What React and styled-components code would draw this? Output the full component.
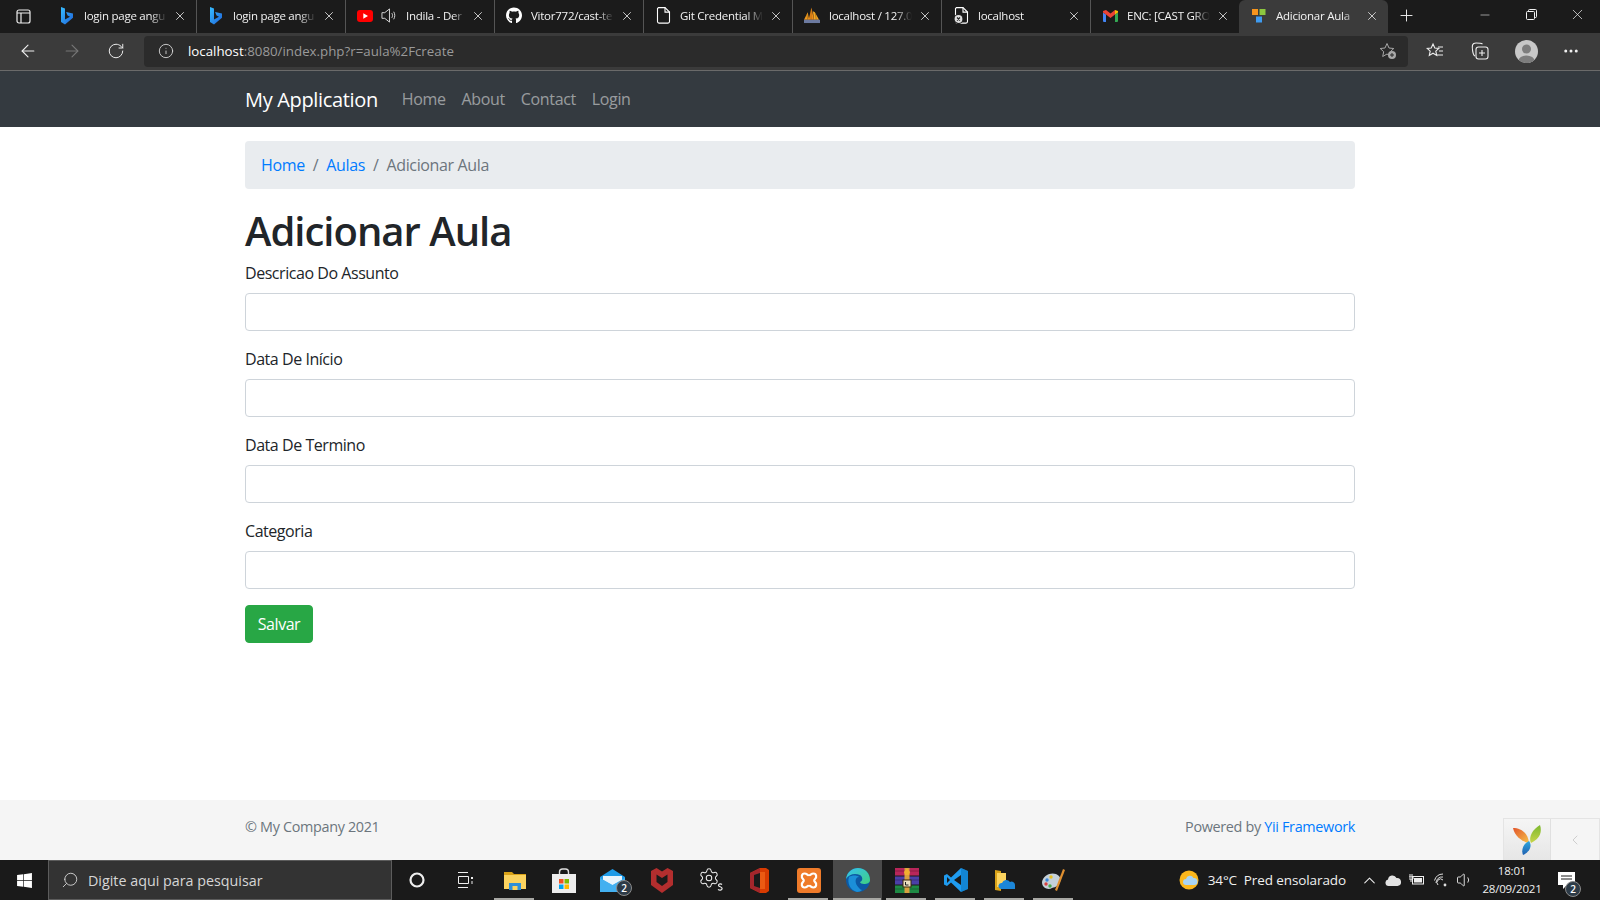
import React from "react";
import styled, { createGlobalStyle } from "styled-components";
import { FaGithub, FaWindows } from "react-icons/fa";
import {
  ArrowLeft,
  ArrowRight,
  ChevronLeft,
  ChevronUp,
  Ellipsis,
  Info,
  Minus,
  Plus,
  RotateCw,
  Search,
  Settings,
  Volume1,
  X,
} from "lucide-react";

const FONT = `"Open Sans", "Noto Sans", sans-serif`;

const Global = createGlobalStyle`
  html, body { margin: 0; padding: 0; background: #fff; }
  body { font-family: ${FONT}; font-size: 16px; color: #212529; }
  * { box-sizing: border-box; }
`;

const Screen = styled.div`
  width: 1600px;
  height: 900px;
  display: flex;
  flex-direction: column;
  overflow: hidden;
  position: relative;
`;

/* browser chrome */
const TabStrip = styled.div`
  height: 33px;
  background: #1b1b1b;
  display: flex;
  align-items: stretch;
`;
const SideButton = styled.div`
  width: 47px;
  display: flex;
  align-items: center;
  justify-content: center;
  color: #eee;
`;
const Tab = styled.div`
  width: 149px;
  height: 33px;
  display: flex;
  align-items: center;
  padding: 0 9px 2px 11px;
  color: #f2f2f2;
  font-size: 11.5px;
  letter-spacing: -0.25px;
  background: ${(p) => (p.$active ? "#3b3b3b" : "transparent")};
  border-radius: ${(p) => (p.$active ? "6px 6px 0 0" : "0")};
  border-left: ${(p) => (p.$divider ? "1px solid #555" : "1px solid transparent")};
`;
const TabIcon = styled.span`
  width: 16px;
  height: 16px;
  flex: none;
  display: flex;
  align-items: center;
  justify-content: center;
  margin-right: ${(p) => p.$gap || 9}px;
  color: #fff;
`;
const TabTitle = styled.span`
  flex: 1;
  min-width: 0;
  white-space: nowrap;
  overflow: hidden;
  -webkit-mask-image: linear-gradient(90deg, #000 80%, transparent 100%);
  mask-image: linear-gradient(90deg, #000 80%, transparent 100%);
`;
const TabClose = styled(X)`
  flex: none;
  margin-left: 6px;
  color: #ddd;
`;
const NewTab = styled.div`
  width: 36px;
  display: flex;
  align-items: center;
  justify-content: center;
  padding-bottom: 2px;
  color: #eee;
`;
const Spacer = styled.div`
  flex: 1;
`;
const WindowButton = styled.div`
  width: 46px;
  display: flex;
  align-items: center;
  justify-content: center;
  color: #f2f2f2;
  padding-bottom: 4px;
`;
const Toolbar = styled.div`
  height: 38px;
  background: #3b3b3b;
  border-bottom: 1px solid #6a6a6a;
  display: flex;
  align-items: center;
  padding: 0 7px 1px 6px;
`;
const NavButton = styled.div`
  width: ${(p) => p.$w || 44}px;
  display: flex;
  justify-content: center;
  color: ${(p) => (p.$disabled ? "#777" : "#f0f0f0")};
`;
const AddressBar = styled.div`
  flex: 1;
  height: 31px;
  margin: 0 5px 0 6px;
  border-radius: 4px;
  background: #2b2b2b;
  display: flex;
  align-items: center;
  padding: 0 11px 0 14px;
  font-size: 13.3px;
  color: #9a9a9a;
`;
const Host = styled.span`
  color: #fff;
`;
const Url = styled.div`
  flex: 1;
  margin-left: 14px;
`;
const Avatar = styled.div`
  width: 23px;
  height: 23px;
  border-radius: 50%;
  background: #c8c8c8;
  overflow: hidden;
  display: flex;
`;

/* page */
const Page = styled.div`
  flex: 1;
  min-height: 0;
  display: flex;
  flex-direction: column;
  background: #fff;
`;
const Container = styled.div`
  width: 1110px;
  margin: 0 auto;
  display: flex;
  align-items: ${(p) => p.$align || "stretch"};
  flex-direction: ${(p) => p.$dir || "row"};
  justify-content: ${(p) => p.$justify || "flex-start"};
`;
const Navbar = styled.nav`
  height: 56px;
  background: #343a40;
  display: flex;
  align-items: center;
`;
const Brand = styled.a`
  font-size: 20px;
  letter-spacing: -0.34px;
  color: #fff;
  margin-right: 24px;
  line-height: 30px;
  padding-top: 2px;
`;
const NavLink = styled.a`
  font-size: 16px;
  letter-spacing: -0.36px;
  color: rgba(255, 255, 255, 0.5);
  margin-right: 16px;
`;
const Main = styled.main`
  flex: 1;
  padding-top: 14px;
`;
const Breadcrumb = styled.div`
  height: 48px;
  border-radius: 4px;
  background: #e9ecef;
  padding: 0 16px;
  margin-bottom: 16px;
  display: flex;
  align-items: center;
  font-size: 16px;
  letter-spacing: -0.36px;
  color: #6c757d;
`;
const Crumb = styled.a`
  color: #007bff;
`;
const CrumbSep = styled.span`
  padding: 0 8px;
`;
const Heading = styled.h1`
  margin: 0 0 8px;
  font-size: 40px;
  line-height: 48px;
  padding-top: 2px;
  height: 48px;
  font-weight: 600;
  letter-spacing: -1px;
  color: #212529;
`;
const Field = styled.div`
  margin-bottom: 16px;
`;
const Label = styled.label`
  display: block;
  font-size: 16px;
  line-height: 24px;
  letter-spacing: -0.45px;
  margin-bottom: 8px;
`;
const Input = styled.input`
  display: block;
  width: 100%;
  height: 38px;
  padding: 6px 12px;
  border: 1px solid #ced4da;
  border-radius: 4px;
  background: #fff;
`;
const Button = styled.button`
  width: 68px;
  height: 38px;
  padding: 0;
  border: 1px solid #28a745;
  border-radius: 4px;
  background: #28a745;
  color: #fff;
  font-family: ${FONT};
  font-size: 16px;
  letter-spacing: -0.45px;
`;
const Footer = styled.footer`
  height: 60px;
  background: #f5f5f5;
  display: flex;
  align-items: center;
  padding-bottom: 7px;
  font-size: 14.4px;
  letter-spacing: -0.33px;
  color: #6c757d;
`;
const FooterLink = styled.a`
  color: #007bff;
`;
const DebugBar = styled.div`
  position: absolute;
  right: 0;
  bottom: 40px;
  height: 42px;
  display: flex;
  border: 1px solid #e4e4e4;
  border-bottom: none;
  background: #f5f5f5;
`;
const DebugCell = styled.div`
  width: ${(p) => p.$w}px;
  display: flex;
  align-items: center;
  justify-content: center;
  color: #c4c4c4;
  background: ${(p) => p.$bg || "transparent"};
  border-right: ${(p) => (p.$line ? "1px solid #e0e0e0" : "none")};
`;

/* windows taskbar */
const Taskbar = styled.div`
  height: 40px;
  background: #1a1a1a;
  display: flex;
  align-items: stretch;
  color: #fff;
`;
const StartButton = styled.div`
  width: 48px;
  display: flex;
  align-items: center;
  justify-content: center;
`;
const SearchBox = styled.div`
  width: 344px;
  background: #333;
  border: 1px solid #5c5c5c;
  display: flex;
  align-items: center;
  gap: 9px;
  padding-left: 12px;
  font-size: 14.3px;
  color: #d6d6d6;
`;
const TaskItem = styled.div`
  width: 49px;
  display: flex;
  align-items: center;
  justify-content: center;
  position: relative;
  background: ${(p) => (p.$active ? "#4a4a4a" : "transparent")};
  &::after {
    content: "";
    display: ${(p) => (p.$running ? "block" : "none")};
    position: absolute;
    left: ${(p) => (p.$active ? "0" : "4px")};
    right: ${(p) => (p.$active ? "1px" : "5px")};
    bottom: 0;
    height: 2px;
    background: #a8a8a4;
  }
`;
const Badge = styled.span`
  position: absolute;
  right: ${(p) => p.$right || 5}px;
  bottom: ${(p) => p.$bottom || 4}px;
  width: 16px;
  height: 16px;
  border-radius: 50%;
  background: #2d3b47;
  border: 1px solid #8a8a8a;
  color: #fff;
  font-size: 10px;
  font-weight: 600;
  display: flex;
  align-items: center;
  justify-content: center;
`;
const Tray = styled.div`
  margin-left: auto;
  padding-right: 12px;
  display: flex;
  align-items: center;
  font-size: 13.5px;
  letter-spacing: -0.1px;
  color: #f0f0f0;
`;
const Weather = styled.div`
  display: flex;
  align-items: center;
  gap: 9px;
  margin-right: 11px;
  white-space: pre;
`;
const TrayIcon = styled.span`
  width: 24px;
  display: flex;
  justify-content: center;
  color: #eee;
`;
const Clock = styled.div`
  width: 66px;
  text-align: center;
  font-size: 11.5px;
  line-height: 18px;
  letter-spacing: -0.2px;
  margin-left: 2px;
`;
const Notify = styled.div`
  width: 43px;
  height: 40px;
  position: relative;
  display: flex;
  align-items: center;
  justify-content: center;
`;

/* drawn icons */
const Bing = () => (
  <svg width="14" height="18" viewBox="0 0 14 18">
    <defs>
      <linearGradient id="bing" x1="0" y1="0" x2="1" y2="1">
        <stop offset="0" stopColor="#37bdff" />
        <stop offset="1" stopColor="#1e62d8" />
      </linearGradient>
    </defs>
    <path d="M1 0l4 1.4v11.2l5-2.900-2.400-1.100-1.500-3.700L13 6.600v4.200L5 17.400 1 15z" fill="url(#bing)" />
  </svg>
);
const YouTube = () => (
  <svg width="16" height="12" viewBox="0 0 16 12">
    <rect width="16" height="12" rx="3" fill="#f00" />
    <path d="M6.300 3.300L11 6l-4.700 2.700z" fill="#fff" />
  </svg>
);
const Speaker = () => (
  <svg width="17" height="17" viewBox="0 0 17 17" fill="none" stroke="#ddd" strokeWidth="1">
    <path d="M1 5.500h3L9 1.500v14l-5-4H1z" />
    <path d="M11.500 6c1 1.500 1 3.500 0 5M13.500 4.500c1.500 2.500 1.500 5.500 0 8" />
  </svg>
);
const FileIcon = ({ broken }) => (
  <svg width="15" height="17" viewBox="0 0 15 17" fill="none" stroke="#fff" strokeWidth="1.100">
    <path d="M2.500.6h6.500l4.500 4.500v9.500a1.500 1.500 0 0 1-1.500 1.500H3a1.500 1.500 0 0 1-1.500-1.500V1.600z" />
    <path d="M9 .6v4.500h4.500" />
    {broken && <circle cx="4.500" cy="12" r="4.500" fill="#ddd" stroke="#1b1b1b" />}
    {broken && <path d="M3 10.500l3 3m0-3l-3 3" stroke="#222" />}
  </svg>
);
const PmaSail = () => (
  <svg width="17" height="17" viewBox="0 0 17 17">
    <path d="M0 13L4 5l1.500 8z" fill="#f29b1d" />
    <path d="M5 13L8 0l2.500 13z" fill="#ef8a17" />
    <path d="M9.500 4l2 1 4.500 8h-5.500z" fill="#f6a823" />
    <path d="M7.500 2v11M3 7l1 6M12 6l1 7" stroke="#8a5a12" strokeWidth="0.600" />
    <rect y="13" width="17" height="3.500" fill="#6c7aa0" />
  </svg>
);
const Gmail = () => (
  <svg width="15" height="12" viewBox="0 0 15 12">
    <path d="M0 2.500L3 4.500V12H1a1 1 0 0 1-1-1z" fill="#4285f4" />
    <path d="M15 2.500l-3 2V12h2a1 1 0 0 0 1-1z" fill="#34a853" />
    <path d="M12 4.500V0l3 1v1.500z" fill="#fbbc04" />
    <path d="M0 2.500V1l3-1 4.500 3.500L12 0v4.500L7.500 8 3 4.500z" fill="#ea4335" />
  </svg>
);
const YiiFavicon = () => (
  <svg width="14" height="14" viewBox="0 0 14 14">
    <rect x="0" y="0" width="6" height="6" fill="#f7941d" />
    <rect x="7.500" y="0" width="6" height="6" fill="#8cc63f" />
    <rect x="4" y="7.500" width="6" height="6" fill="#3f9bf0" />
  </svg>
);
const StarPlus = () => (
  <svg width="18" height="18" viewBox="0 0 18 18" fill="none" stroke="#a8a8a8" strokeWidth="1">
    <path d="M8 1.500l2 4.500 4.800.5-3.500 3.200 1 4.800L8 12l-4.300 2.500 1-4.800L1.200 6.500 6 6z" />
    <circle cx="13" cy="13" r="4" fill="#a8a8a8" stroke="none" />
    <path d="M13 11v4M11 13h4" stroke="#2b2b2b" />
  </svg>
);
const Favourites = () => (
  <svg width="18" height="18" viewBox="0 0 18 18" fill="none" stroke="#eee" strokeWidth="1.100">
    <path d="M7 2l1.800 4 4 .4-3 2.800.9 4.200L7 11.200l-3.700 2.200.9-4.200-3-2.800 4-.4z" />
    <path d="M12 5h5M13 9h4M11 13h6" />
  </svg>
);
const Collections = () => (
  <svg width="18" height="18" viewBox="0 0 18 18" fill="none" stroke="#eee" strokeWidth="1.100">
    <path d="M4 14C1.500 13 1 5 1.500 3 2 1.500 3 1 5 1c3 0 5 0 6.500 1" />
    <rect x="5" y="5" width="12" height="12" rx="2.500" />
    <path d="M11 8v6M8 11h6" />
  </svg>
);
const RestoreIcon = () => (
  <svg width="11" height="11" viewBox="0 0 11 11" fill="none" stroke="#f2f2f2">
    <rect x="0.500" y="2.500" width="8" height="8" rx="1" />
    <path d="M2.500 2.500V1.500a1 1 0 0 1 1-1h6a1 1 0 0 1 1 1v6a1 1 0 0 1-1 1h-1" />
  </svg>
);
const Explorer = () => (
  <svg width="22" height="19" viewBox="0 0 22 19">
    <path d="M0 1h8l2 2h12v3H0z" fill="#d9a218" />
    <rect y="4" width="22" height="14" fill="#fbd35f" />
    <rect x="5" y="12" width="12" height="7" fill="#2f8fd8" />
    <rect x="8.500" y="15" width="5" height="4" fill="#fbd35f" />
  </svg>
);
const Store = () => (
  <svg width="24" height="25" viewBox="0 0 24 25">
    <path d="M7.500 7V4a3 3 0 0 1 3-3h3a3 3 0 0 1 3 3v3" fill="none" stroke="#ddd" strokeWidth="1.400" />
    <rect y="6" width="24" height="19" fill="#ededed" />
    <rect x="7" y="11" width="4.500" height="4.500" fill="#f25022" />
    <rect x="12.500" y="11" width="4.500" height="4.500" fill="#7fba00" />
    <rect x="7" y="16.500" width="4.500" height="4.500" fill="#00a4ef" />
    <rect x="12.500" y="16.500" width="4.500" height="4.500" fill="#ffb900" />
  </svg>
);
const Mail = () => (
  <svg width="25" height="23" viewBox="0 0 25 23">
    <path d="M0 8L12.500 0 25 8v15H0z" fill="#1e9be8" />
    <path d="M3 7h19v4l-9.500 5.500L3 11z" fill="#e8f4fc" />
    <path d="M0 9l12.500 7L25 9v14H0z" fill="#43b0f0" />
  </svg>
);
const McAfee = () => (
  <svg width="22" height="25" viewBox="0 0 22 25">
    <path d="M0 3l5.500-3L11 3.500 16.500 0 22 3v14l-11 8-11-8z" fill="#b32e2e" />
    <path d="M5.500 6.500L11 10l5.500-3.500V14L11 18l-5.500-4z" fill="#1a1a1a" />
  </svg>
);
const SettingsS = () => (
  <svg width="25" height="26" viewBox="0 0 25 26" fill="none" stroke="#eee" strokeWidth="1.200">
    <Settings x="0" y="0" width="22" height="22" strokeWidth={1.100} color="#eee" />
    <path d="M24 17.500c-1-1-3.500-1-3.500.8s3.600 1.200 3.600 3.200-2.900 2.100-4 .900" fill="#1a1a1a" />
  </svg>
);
const Office = () => (
  <svg width="19" height="25" viewBox="0 0 19 25">
    <path d="M0 5L10 0h6l3 2v21l-3 2h-6L0 20V5z" fill="#d83b01" />
    <path d="M0 5l10-5v25L0 20z" fill="#a4262c" />
    <path d="M4 7l6-2v15l-6-2z" fill="#1a1a1a" />
    <path d="M10 4h5v17h-5z" fill="#eb5a12" />
  </svg>
);
const Xampp = () => (
  <svg width="24" height="25" viewBox="0 0 24 25">
    <rect width="24" height="25" rx="3" fill="#ef7b2a" />
    <path d="M7.500 5.500c2.500 0 3 2 4.500 2s2-2 4.500-2c3 0 3.500 4 1.500 5.500-1 .8-1 2 0 3 2 1.500 1.500 5.500-1.500 5.500-2.500 0-3-2-4.500-2s-2 2-4.500 2c-3 0-3.500-4-1.500-5.500 1-1 1-2.200 0-3-2-1.500-1.500-5.500 1.500-5.500z" fill="none" stroke="#fff" strokeWidth="2.200" />
    <path d="M12 8v9" stroke="#ef7b2a" strokeWidth="1.500" />
  </svg>
);
const Edge = () => (
  <svg width="24" height="24" viewBox="0 0 24 24">
    <defs>
      <linearGradient id="edgeA" x1="0" y1="0" x2="1" y2="1">
        <stop offset="0" stopColor="#35c1f1" />
        <stop offset="1" stopColor="#40d080" />
      </linearGradient>
    </defs>
    <circle cx="12" cy="12" r="12" fill="#0c59a4" />
    <path d="M0 11C1 4 6 0 12 0c7 0 12 5 12 12 0 3-3 4-6 4-2 0-4-1-4-2 3-1 3-5 0-7C9 5 3 6 0 11z" fill="url(#edgeA)" />
    <path d="M3 9c3-2 8-2 10 0-4 0-5 6 0 11 1 1 2 2 3 2-1 1-3 2-5 2C4 22 1 15 3 9z" fill="#1b8fd8" />
  </svg>
);
const WinRar = () => (
  <svg width="24" height="25" viewBox="0 0 24 25">
    <rect width="24" height="7.500" fill="#b8265a" />
    <rect y="8.500" width="24" height="8" fill="#4b3fa8" />
    <rect y="17.500" width="24" height="7.500" fill="#1e8a44" />
    <path d="M0 3h24M0 12h24M0 21h24" stroke="#000" strokeOpacity="0.25" />
    <rect x="9.500" width="5" height="25" fill="#d8a040" />
    <path d="M12 0l3 4-1 3h-4L9 4z" fill="#f0b030" />
    <rect x="8" y="12" width="8" height="7" fill="#eadfc0" stroke="#3a2408" />
    <path d="M10.500 14v3h3" stroke="#222" fill="none" />
  </svg>
);
const VSCode = () => (
  <svg width="24" height="24" viewBox="0 0 24 24">
    <path d="M17 0l7 3v18l-7 3L7 14.500 3 18l-3-1.500V7.500L3 6l4 3.500z" fill="#1f9cf0" />
    <path d="M17 7L10 12l7 5z" fill="#1a1a1a" />
    <path d="M3 9l3 3-3 3z" fill="#1a1a1a" />
    <path d="M17 0l7 3v18l-7 3z" fill="#0065a9" opacity="0.4" />
  </svg>
);
const OneDriveFolder = () => (
  <svg width="20" height="23" viewBox="0 0 20 23">
    <path d="M0 1l6 1v20l-6-1z" fill="#d9a218" />
    <path d="M2 4h9v14H2z" fill="#fbd35f" />
    <path d="M6 20a3 3 0 0 1 1-6 4.500 4.500 0 0 1 8-1 3.500 3.500 0 0 1 5 3.500V20z" fill="#1c86d8" />
  </svg>
);
const PaintPalette = () => (
  <svg width="24" height="25" viewBox="0 0 24 25">
    <path d="M0 14C1 7 9 4 14 6c5 2 6 7 2 11-3 3-4 2-6 3-3 2-10 1-10-6z" fill="#c4d0d8" />
    <circle cx="5" cy="12" r="1.700" fill="#3a86d8" />
    <circle cx="9" cy="9" r="1.700" fill="#e8c020" />
    <circle cx="4" cy="16" r="1.700" fill="#d84040" />
    <circle cx="8" cy="18" r="1.700" fill="#4aa84a" />
    <path d="M21 1l2 1-8 21-2-1z" fill="#e09030" />
  </svg>
);
const WeatherIcon = () => (
  <svg width="20" height="20" viewBox="0 0 20 20">
    <circle cx="10" cy="10" r="9.500" fill="#fbb71c" />
    <path d="M7 15a3 3 0 0 1 0-6 4 4 0 0 1 7.500-1 3.500 3.500 0 0 1 4 3.500A3.500 3.500 0 0 1 15 15z" fill="#a9d4f2" />
  </svg>
);
const Cloud = () => (
  <svg width="16" height="11" viewBox="0 0 16 11">
    <path d="M3.500 11a3.300 3.300 0 0 1-.5-6.500A4.500 4.500 0 0 1 11.500 3 3.900 3.900 0 0 1 12.500 11z" fill="#e2e2e2" />
  </svg>
);
const Battery = () => (
  <svg width="16" height="12" viewBox="0 0 16 12" fill="none" stroke="#eee">
    <rect x="3.500" y="2.500" width="11" height="7.500" />
    <rect x="5" y="4" width="8" height="4.500" fill="#eee" stroke="none" />
    <path d="M1 0v3M3 0v3M0 3h4v2H0M2 5v3" />
  </svg>
);
const Wifi = () => (
  <svg width="14" height="14" viewBox="0 0 14 14" fill="none" stroke="#ddd">
    <path d="M.500 7.500A9 9 0 0 1 9 1M2 10a6 6 0 0 1 7-6M4 12a3.500 3.500 0 0 1 5-5" />
    <circle cx="11" cy="12" r="1.400" fill="#ddd" stroke="none" />
  </svg>
);
const Bubble = () => (
  <svg width="17" height="17" viewBox="0 0 17 17">
    <path d="M0 0h17v13H9l-4 4v-4H0z" fill="#fff" />
    <path d="M3 4h11M3 7h11" stroke="#1a1a1a" />
  </svg>
);
const YiiLogo = () => (
  <svg width="29" height="30" viewBox="0 0 29 30">
    <defs>
      <linearGradient id="yiiOrange" x1="0" y1="0" x2="1" y2="1">
        <stop offset="0" stopColor="#e2552a" />
        <stop offset="1" stopColor="#f6c24a" />
      </linearGradient>
      <linearGradient id="yiiGreen" x1="0.500" y1="0" x2="0.500" y2="1">
        <stop offset="0" stopColor="#7cb82f" />
        <stop offset="1" stopColor="#c8d64a" />
      </linearGradient>
      <linearGradient id="yiiBlue" x1="0.500" y1="0" x2="0.500" y2="1">
        <stop offset="0" stopColor="#2ea8df" />
        <stop offset="1" stopColor="#2060b0" />
      </linearGradient>
    </defs>
    <path d="M0 3c7 0 15 4 16 15C10 17 2 12 0 3z" fill="url(#yiiOrange)" />
    <path d="M27 0c2 6 1 13-9 18C15 12 20 4 27 0z" fill="url(#yiiGreen)" />
    <path d="M16 16c3 4 2 10-6 14-2-5 0-11 6-14z" fill="url(#yiiBlue)" />
  </svg>
);

const TABS = [
  { title: "login page angu", icon: <Bing /> },
  { title: "login page angu", icon: <Bing /> },
  { title: "Indila - Der", icon: <YouTube />, gap: 8, extra: <Speaker /> },
  { title: "Vitor772/cast-te", icon: <FaGithub size={17} /> },
  { title: "Git Credential M", icon: <FileIcon /> },
  { title: "localhost / 127.0", icon: <PmaSail /> },
  { title: "localhost", icon: <FileIcon broken /> },
  { title: "ENC: [CAST GRO", icon: <Gmail /> },
  { title: "Adicionar Aula", icon: <YiiFavicon />, active: true },
];

const TASK_ITEMS = [
  { icon: <Explorer />, running: true },
  { icon: <Store /> },
  { icon: <Mail />, badge: 2 },
  { icon: <McAfee /> },
  { icon: <SettingsS /> },
  { icon: <Office /> },
  { icon: <Xampp />, running: true },
  { icon: <Edge />, running: true, active: true },
  { icon: <WinRar />, running: true },
  { icon: <VSCode />, running: true },
  { icon: <OneDriveFolder />, running: true },
  { icon: <PaintPalette />, running: true },
];

const FIELDS = ["Descricao Do Assunto", "Data De Início", "Data De Termino", "Categoria"];

const App = () => {
  return (
    <Screen>
      <Global />
      <TabStrip>
        <SideButton>
          <svg width="15" height="15" viewBox="0 0 15 15" fill="none" stroke="#eee" strokeWidth="1.200">
            <rect x="1" y="1" width="13" height="13" rx="2" />
            <path d="M1 4h13M5 4v10" />
          </svg>
        </SideButton>
        {TABS.map((t, i) => (
          <Tab key={i} $active={t.active} $divider={!t.active && i > 0}>
            <TabIcon $gap={t.gap}>{t.icon}</TabIcon>
            {t.extra && <TabIcon>{t.extra}</TabIcon>}
            <TabTitle>{t.title}</TabTitle>
            <TabClose size={14} strokeWidth={1.5} />
          </Tab>
        ))}
        <NewTab>
          <Plus size={19} strokeWidth={1.2} />
        </NewTab>
        <Spacer />
        <WindowButton>
          <Minus size={14} strokeWidth={1} />
        </WindowButton>
        <WindowButton>
          <RestoreIcon />
        </WindowButton>
        <WindowButton>
          <X size={17} strokeWidth={1} />
        </WindowButton>
      </TabStrip>
      <Toolbar>
        <NavButton>
          <ArrowLeft size={20} strokeWidth={1.3} />
        </NavButton>
        <NavButton $disabled>
          <ArrowRight size={20} strokeWidth={1.3} />
        </NavButton>
        <NavButton>
          <RotateCw size={18} strokeWidth={1.3} />
        </NavButton>
        <AddressBar>
          <Info size={16} strokeWidth={1.3} color="#ddd" />
          <Url>
            <Host>localhost</Host>:8080/index.php?r=aula%2Fcreate
          </Url>
          <StarPlus />
        </AddressBar>
        <NavButton>
          <Favourites />
        </NavButton>
        <NavButton $w={46}>
          <Collections />
        </NavButton>
        <NavButton $w={46}>
          <Avatar>
            <svg width="23" height="23" viewBox="0 0 23 23">
              <circle cx="11.500" cy="9" r="4.500" fill="#7d7d7d" />
              <ellipse cx="11.500" cy="21" rx="8" ry="5.500" fill="#7d7d7d" />
            </svg>
          </Avatar>
        </NavButton>
        <NavButton>
          <Ellipsis size={18} strokeWidth={2} />
        </NavButton>
      </Toolbar>
      <Page>
        <Navbar>
          <Container $align="center">
            <Brand>My Application</Brand>
            <NavLink>Home</NavLink>
            <NavLink>About</NavLink>
            <NavLink>Contact</NavLink>
            <NavLink>Login</NavLink>
          </Container>
        </Navbar>
        <Main>
          <Container $dir="column">
            <Breadcrumb>
              <Crumb>Home</Crumb>
              <CrumbSep>/</CrumbSep>
              <Crumb>Aulas</Crumb>
              <CrumbSep>/</CrumbSep>
              Adicionar Aula
            </Breadcrumb>
            <Heading>Adicionar Aula</Heading>
            {FIELDS.map((f) => (
              <Field key={f}>
                <Label>{f}</Label>
                <Input type="text" />
              </Field>
            ))}
            <div>
              <Button>Salvar</Button>
            </div>
          </Container>
        </Main>
        <Footer>
          <Container $justify="space-between">
            <span>© My Company 2021</span>
            <span>
              Powered by <FooterLink>Yii Framework</FooterLink>
            </span>
          </Container>
        </Footer>
      </Page>
      <Taskbar>
        <StartButton>
          <FaWindows size={17} />
        </StartButton>
        <SearchBox>
          <Search size={18} strokeWidth={1.2} style={{ transform: "scaleX(-1)" }} />
          Digite aqui para pesquisar
        </SearchBox>
        <TaskItem>
          <svg width="16" height="16" viewBox="0 0 16 16" fill="none" stroke="#eee" strokeWidth="2.200">
            <circle cx="8" cy="8" r="6.500" />
          </svg>
        </TaskItem>
        <TaskItem>
          <svg width="16" height="16" viewBox="0 0 16 16" fill="none" stroke="#eee">
            <path d="M0 .5h10M0 15.500h10M.5 4.500h10v7H.5z" />
            <rect x="13" y="5" width="2" height="2" fill="#eee" stroke="none" />
            <path d="M14 9v3" />
          </svg>
        </TaskItem>
        {TASK_ITEMS.map((t, i) => (
          <TaskItem key={i} $running={t.running} $active={t.active}>
            {t.icon}
            {t.badge && <Badge>{t.badge}</Badge>}
          </TaskItem>
        ))}
        <Tray>
          <Weather>
            <WeatherIcon />
            <span>34°C  Pred ensolarado</span>
          </Weather>
          <TrayIcon>
            <ChevronUp size={19} strokeWidth={1.3} />
          </TrayIcon>
          <TrayIcon>
            <Cloud />
          </TrayIcon>
          <TrayIcon>
            <Battery />
          </TrayIcon>
          <TrayIcon>
            <Wifi />
          </TrayIcon>
          <TrayIcon>
            <Volume1 size={18} strokeWidth={1.2} />
          </TrayIcon>
          <Clock>
            18:01
            <br />
            28/09/2021
          </Clock>
          <Notify>
            <Bubble />
            <Badge $right={7} $bottom={3}>2</Badge>
          </Notify>
        </Tray>
      </Taskbar>
      <DebugBar>
        <DebugCell $w={47} $line $bg="linear-gradient(#f5f5f5, #e6e6e6)">
          <YiiLogo />
        </DebugCell>
        <DebugCell $w={48}>
          <ChevronLeft size={16} strokeWidth={1.2} />
        </DebugCell>
      </DebugBar>
    </Screen>
  );
};

export default App;
